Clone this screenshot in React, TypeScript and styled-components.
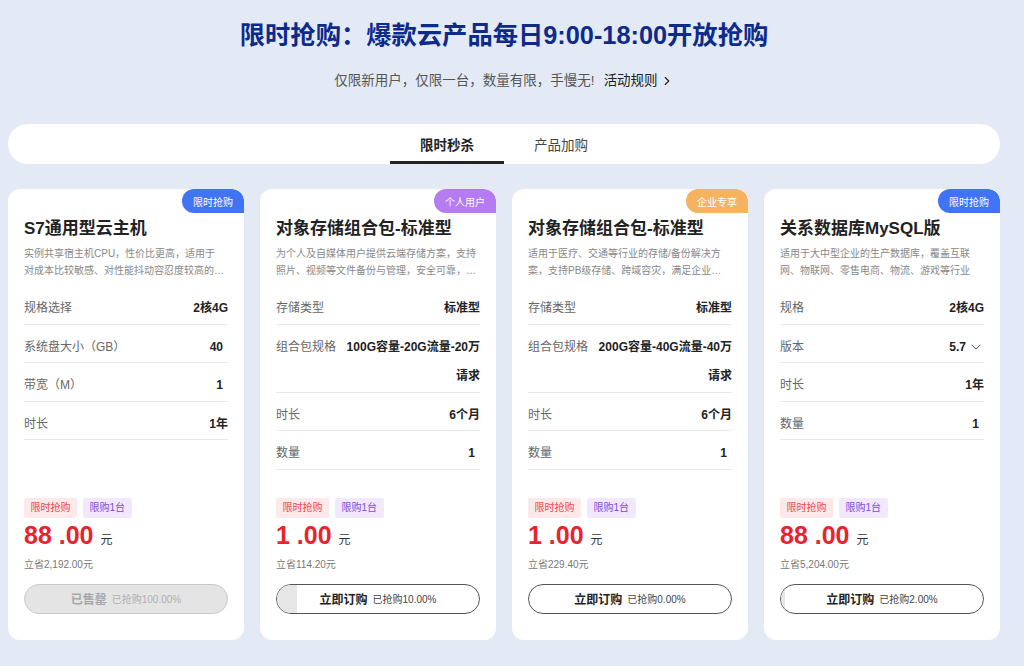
import React from 'react';
import styled, { createGlobalStyle } from 'styled-components';
import { ChevronRight, ChevronDown } from 'lucide-react';

const GlobalStyle = createGlobalStyle`
  html, body { margin: 0; padding: 0; background: #e3eaf6; }
  body { font-family: "Liberation Sans", "Noto Sans CJK SC", sans-serif; }
  * { box-sizing: border-box; }
`;

const Page = styled.div`
  width: 992px;
  margin-left: 8px;
  padding: 17px 0 26px;
  display: flex;
  flex-direction: column;
  align-items: center;
`;

const Title = styled.h1`
  margin: 0;
  font-size: 25.3px;
  line-height: 36px;
  font-weight: 700;
  color: #0e2a8a;
`;

const Subtitle = styled.div`
  margin-top: 18px;
  display: flex;
  align-items: center;
  font-size: 13.5px;
  line-height: 20px;
  color: #555;
`;

const RuleLink = styled.a`
  margin-left: 9px;
  display: inline-flex;
  align-items: center;
  gap: 2px;
  color: #222;
  text-decoration: none;
`;

const TabBar = styled.div`
  margin-top: 33px;
  width: 100%;
  height: 40px;
  border-radius: 20px;
  background: #fff;
  display: flex;
  justify-content: center;
`;

const Tab = styled.div<{ $active?: boolean }>`
  position: relative;
  width: 114px;
  display: flex;
  align-items: center;
  justify-content: center;
  font-size: 13.5px;
  font-weight: ${p => (p.$active ? 700 : 400)};
  color: ${p => (p.$active ? '#222' : '#444')};
  &::after {
    content: '';
    display: ${p => (p.$active ? 'block' : 'none')};
    position: absolute;
    left: 0;
    right: 0;
    bottom: 0;
    height: 3px;
    background: #222;
  }
`;

const Grid = styled.div`
  margin-top: 25px;
  width: 100%;
  display: grid;
  grid-template-columns: repeat(4, 236px);
  gap: 16px;
`;

const Card = styled.div`
  position: relative;
  overflow: hidden;
  background: #fff;
  border-radius: 12px;
  padding: 28px 16px 26px;
  display: flex;
  flex-direction: column;
`;

const Badge = styled.div<{ $color: string }>`
  position: absolute;
  top: 0;
  right: 0;
  width: 62px;
  height: 24px;
  border-radius: 12px 12px 0 12px;
  background: ${p => p.$color};
  color: #fff;
  font-size: 10px;
  display: flex;
  align-items: center;
  justify-content: center;
`;

const CardTitle = styled.h2`
  margin: 0;
  font-size: 17px;
  line-height: 24px;
  font-weight: 700;
  color: #222;
`;

const Desc = styled.p`
  margin: 4px 0 0;
  padding-right: 3.5px;
  font-size: 10px;
  line-height: 17px;
  height: 34px;
  color: #888;
  display: -webkit-box;
  -webkit-line-clamp: 2;
  -webkit-box-orient: vertical;
  overflow: hidden;
`;

const Specs = styled.div`
  margin-top: 7px;
  display: flex;
  flex-direction: column;
`;

const SpecRow = styled.div`
  display: flex;
  justify-content: space-between;
  padding-top: 8px;
  line-height: 29.5px;
  border-bottom: 1px solid #e8e8e8;
`;

const SpecLabel = styled.span`
  flex-shrink: 0;
  margin-right: 8px;
  font-size: 12px;
  color: #666;
`;

const SpecValue = styled.span<{ $pad?: boolean }>`
  display: flex;
  align-items: center;
  justify-content: flex-end;
  text-align: right;
  font-size: 12px;
  font-weight: 700;
  color: #222;
  padding-right: ${p => (p.$pad ? '5px' : '0')};
`;

const WrapValue = styled.span`
  text-align: right;
  font-size: 12px;
  font-weight: 700;
  color: #222;
`;

const Bottom = styled.div`
  margin-top: auto;
  padding-top: 28px;
  display: flex;
  flex-direction: column;
`;

const Tags = styled.div`
  display: flex;
  gap: 6px;
`;

const Tag = styled.span<{ $kind: 'red' | 'purple' }>`
  height: 20px;
  line-height: 20px;
  padding: 0 6.5px;
  border-radius: 2px;
  font-size: 10px;
  color: ${p => (p.$kind === 'red' ? '#f0474d' : '#7a4bd8')};
  background: ${p => (p.$kind === 'red' ? '#fde9e9' : '#f2e8fd')};
`;

const Price = styled.div`
  display: flex;
  align-items: baseline;
  height: 34px;
  line-height: 34px;
`;

const PriceNum = styled.span`
  font-size: 25px;
  font-weight: 700;
  color: #e8232d;
`;

const Unit = styled.span`
  margin-left: 7px;
  font-size: 12px;
  line-height: 12px;
  color: #333;
`;

const Save = styled.div`
  margin-top: 5px;
  font-size: 10px;
  line-height: 16px;
  color: #777;
`;

const BuyButton = styled.button<{ $soldOut?: boolean }>`
  position: relative;
  overflow: hidden;
  margin-top: 11px;
  width: 100%;
  height: 30px;
  border-radius: 15px;
  border: 1px solid ${p => (p.$soldOut ? '#cacaca' : '#555')};
  background: ${p => (p.$soldOut ? '#e4e4e4' : '#fff')};
  display: flex;
  align-items: center;
  justify-content: center;
  gap: 5px;
  padding: 0;
  font-family: inherit;
  cursor: ${p => (p.$soldOut ? 'default' : 'pointer')};
`;

const Fill = styled.span`
  position: absolute;
  left: 0;
  top: 0;
  bottom: 0;
  background: #e6e6e6;
`;

const BtnMain = styled.span<{ $soldOut?: boolean }>`
  position: relative;
  font-size: 12px;
  font-weight: 700;
  color: ${p => (p.$soldOut ? '#a8a8a8' : '#222')};
`;

const BtnSub = styled.span<{ $soldOut?: boolean }>`
  position: relative;
  font-size: 10px;
  color: ${p => (p.$soldOut ? '#b0b0b0' : '#444')};
`;

type Spec = { label: string; value: string; pad?: boolean; select?: boolean; wrap?: boolean };
type Product = {
  badge: string;
  badgeColor: string;
  title: string;
  desc: string;
  specs: Spec[];
  price: string;
  save: string;
  progress: number;
  soldOut?: boolean;
};

const products: Product[] = [
  {
    badge: '限时抢购',
    badgeColor: '#4173f5',
    title: 'S7通用型云主机',
    desc: '实例共享宿主机CPU，性价比更高，适用于对成本比较敏感、对性能抖动容忍度较高的业务场景',
    specs: [
      { label: '规格选择', value: '2核4G' },
      { label: '系统盘大小（GB）', value: '40', pad: true },
      { label: '带宽（M）', value: '1', pad: true },
      { label: '时长', value: '1年' },
    ],
    price: '88 .00',
    save: '立省2,192.00元',
    progress: 100,
    soldOut: true,
  },
  {
    badge: '个人用户',
    badgeColor: '#b47cf0',
    title: '对象存储组合包-标准型',
    desc: '为个人及自媒体用户提供云端存储方案，支持照片、视频等文件备份与管理，安全可靠，随时随地访问',
    specs: [
      { label: '存储类型', value: '标准型' },
      { label: '组合包规格', value: '100G容量-20G流量-20万请求', wrap: true },
      { label: '时长', value: '6个月' },
      { label: '数量', value: '1', pad: true },
    ],
    price: '1 .00',
    save: '立省114.20元',
    progress: 10,
  },
  {
    badge: '企业专享',
    badgeColor: '#f5b35f',
    title: '对象存储组合包-标准型',
    desc: '适用于医疗、交通等行业的存储/备份解决方案，支持PB级存储、跨域容灾，满足企业级数据安全需求',
    specs: [
      { label: '存储类型', value: '标准型' },
      { label: '组合包规格', value: '200G容量-40G流量-40万请求', wrap: true },
      { label: '时长', value: '6个月' },
      { label: '数量', value: '1', pad: true },
    ],
    price: '1 .00',
    save: '立省229.40元',
    progress: 0,
  },
  {
    badge: '限时抢购',
    badgeColor: '#4173f5',
    title: '关系数据库MySQL版',
    desc: '适用于大中型企业的生产数据库，覆盖互联网、物联网、零售电商、物流、游戏等行业',
    specs: [
      { label: '规格', value: '2核4G' },
      { label: '版本', value: '5.7', select: true },
      { label: '时长', value: '1年' },
      { label: '数量', value: '1', pad: true },
    ],
    price: '88 .00',
    save: '立省5,204.00元',
    progress: 2,
  },
];

const ProductCard: React.FC<{ p: Product }> = ({ p }) => (
  <Card>
    <Badge $color={p.badgeColor}>{p.badge}</Badge>
    <CardTitle>{p.title}</CardTitle>
    <Desc>{p.desc}</Desc>
    <Specs>
      {p.specs.map(s => (
        <SpecRow key={s.label}>
          <SpecLabel>{s.label}</SpecLabel>
          {s.wrap ? (
            <WrapValue>{s.value}</WrapValue>
          ) : (
            <SpecValue $pad={s.pad}>
              {s.value}
              {s.select && <ChevronDown size={16} strokeWidth={1.5} color="#555" style={{ marginLeft: 2 }} />}
            </SpecValue>
          )}
        </SpecRow>
      ))}
    </Specs>
    <Bottom>
      <Tags>
        <Tag $kind="red">限时抢购</Tag>
        <Tag $kind="purple">限购1台</Tag>
      </Tags>
      <Price>
        <PriceNum>{p.price}</PriceNum>
        <Unit>元</Unit>
      </Price>
      <Save>{p.save}</Save>
      <BuyButton $soldOut={p.soldOut}>
        {!p.soldOut && <Fill style={{ width: `${p.progress}%` }} />}
        <BtnMain $soldOut={p.soldOut}>{p.soldOut ? '已售罄' : '立即订购'}</BtnMain>
        <BtnSub $soldOut={p.soldOut}>已抢购{p.progress.toFixed(2)}%</BtnSub>
      </BuyButton>
    </Bottom>
  </Card>
);

export default function App() {
  return (
    <>
      <GlobalStyle />
      <Page>
        <Title>限时抢购：爆款云产品每日9:00-18:00开放抢购</Title>
        <Subtitle>
          仅限新用户，仅限一台，数量有限，手慢无!
          <RuleLink href="#">
            活动规则
            <ChevronRight size={14} strokeWidth={2} />
          </RuleLink>
        </Subtitle>
        <TabBar>
          <Tab $active>限时秒杀</Tab>
          <Tab>产品加购</Tab>
        </TabBar>
        <Grid>
          {products.map((p, i) => (
            <ProductCard key={i} p={p} />
          ))}
        </Grid>
      </Page>
    </>
  );
}
